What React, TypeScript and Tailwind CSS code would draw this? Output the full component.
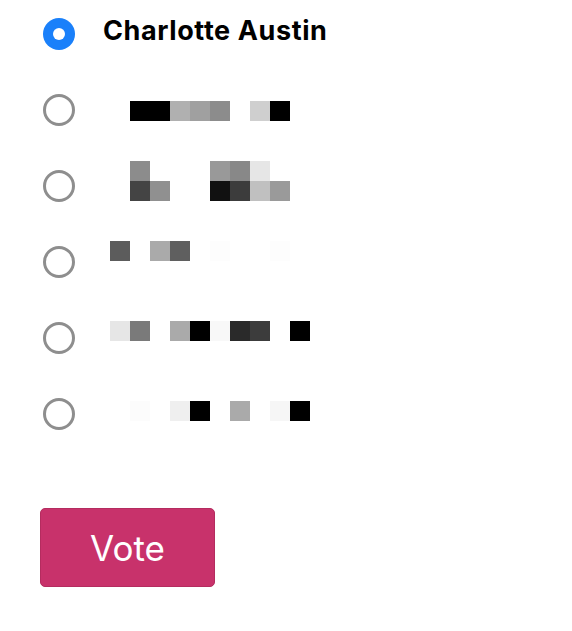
const cells: Record<number, string>[][] = [
  [{ 1: "#000", 2: "#000", 3: "#b0b0b0", 4: "#a0a0a0", 5: "#8c8c8c", 7: "#cfcfcf", 8: "#000" }],
  [
    { 1: "#8c8c8c", 5: "#999999", 6: "#888888", 7: "#e6e6e6" },
    { 1: "#444444", 2: "#909090", 5: "#111111", 6: "#3c3c3c", 7: "#c0c0c0", 8: "#9a9a9a" },
  ],
  [{ 0: "#5c5c5c", 2: "#aaaaaa", 3: "#5f5f5f", 5: "#fdfdfd", 8: "#fdfdfd" }],
  [{ 0: "#e6e6e6", 1: "#7a7a7a", 3: "#aaaaaa", 4: "#000", 5: "#f8f8f8", 6: "#2a2a2a", 7: "#3c3c3c", 9: "#000" }],
  [{ 1: "#fcfcfc", 3: "#efefef", 4: "#000", 6: "#aaaaaa", 8: "#f6f6f6", 9: "#000" }],
];

const offsets = ["mt-[25px]", "mt-[9px]", "mt-[13px]", "mt-[17px]", "mt-[21px]"];

function Radio({ checked }: { checked?: boolean }) {
  if (checked) {
    return (
      <div className="mt-[18px] ml-[43px] w-[32px] h-[32px] rounded-full bg-[#1a80fa] flex items-center justify-center shrink-0">
        <div className="w-[12px] h-[12px] rounded-full bg-white" />
      </div>
    );
  }
  return <div className="mt-[18px] ml-[43px] w-[32px] h-[32px] rounded-full border-[3px] border-[#8e8e8e] shrink-0" />;
}

function Pixels({ rows }: { rows: Record<number, string>[] }) {
  return (
    <div className="flex flex-col">
      {rows.map((row, r) => (
        <div key={r} className="flex">
          {Array.from({ length: 10 }).map((_, c) => (
            <div key={c} className="w-[20px] h-[20px]" style={{ background: row[c] ?? "transparent" }} />
          ))}
        </div>
      ))}
    </div>
  );
}

export default function App() {
  return (
    <div className="w-[572px] h-[631px] bg-white font-['Inter',sans-serif]">
      <div className="flex flex-row h-[76px]">
        <Radio checked />
        <p className="ml-[28px] mt-[16px] text-[27px] leading-[30px] font-bold text-black tracking-[0.6px]">
          Charlotte Austin
        </p>
      </div>
      {cells.map((rows, i) => (
        <div key={i} className="flex flex-row h-[76px]">
          <Radio />
          <div className={`ml-[35px] ${offsets[i]}`}>
            <Pixels rows={rows} />
          </div>
        </div>
      ))}
      <button className="ml-[40px] mt-[52px] w-[175px] h-[79px] rounded-[5px] bg-[#c8326b] border border-[#b42c5f] text-white text-[35px] font-normal flex items-center justify-center pt-[1px]">
        Vote
      </button>
    </div>
  );
}
